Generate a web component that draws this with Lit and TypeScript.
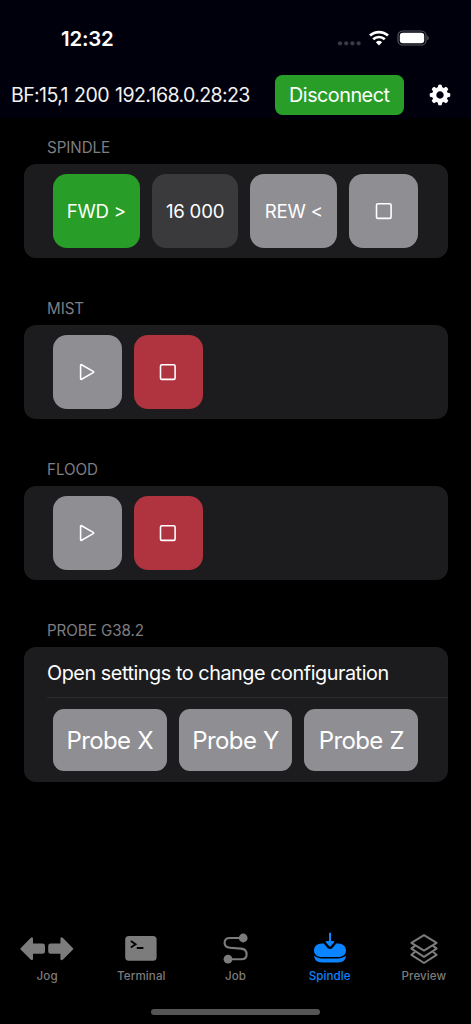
import { LitElement, html, css, svg } from "lit";
import { customElement, property } from "lit/decorators.js";

const gearTeeth = [0, 45, 90, 135, 180, 225, 270, 315];

const stopIcon = html`<svg width="18" height="18" viewBox="0 0 18 18">
  <rect x="1.5" y="1.8" width="14.6" height="14.6" rx="1.4" fill="none" stroke="#fff" stroke-width="1.6" />
</svg>`;

const playIcon = html`<svg width="18" height="18" viewBox="0 0 18 18">
  <path d="M2.6 2.2V15.8Q2.7 16.7 3.6 16.2L15.2 9.6Q16 9 15.2 8.4L3.6 1.8Q2.7 1.3 2.6 2.2Z" fill="none" stroke="#fff" stroke-width="1.6" stroke-linejoin="round" />
</svg>`;

const tabIcons: Record<string, unknown> = {
  Jog: html`<svg width="54" height="34" viewBox="0 0 54 34" fill="currentColor">
    <path d="M0.6 16.2L10.6 6Q13 4 13 7V11.6H22.5Q25 11.6 25 14V19.4Q25 21.8 22.5 21.8H13V26.6Q13 29.4 10.6 27.4L0.6 17.6Q0 16.9 0.6 16.2Z" />
    <path d="M53 16.2L43 6Q40.4 4 40.4 7V11.6H30.6Q28.2 11.6 28.2 14V19.4Q28.2 21.8 30.6 21.8H40.4V26.6Q40.4 29.4 43 27.4L53 17.6Q53.6 16.9 53 16.2Z" />
  </svg>`,
  Terminal: html`<svg width="32" height="34" viewBox="0 0 32 34">
    <rect x="0.2" y="4" width="31.4" height="24.8" rx="3.6" fill="currentColor" />
    <path d="M5.8 9L10.6 12.2L5.8 15.4M11.8 16H18.4" fill="none" stroke="#000" stroke-width="1.8" />
  </svg>`,
  Job: html`<svg width="26" height="34" viewBox="0.4 0 26 34" fill="none" stroke="currentColor">
    <circle cx="20.6" cy="6" r="4.4" fill="currentColor" stroke="none" />
    <circle cx="5.4" cy="27.2" r="4.4" fill="currentColor" stroke="none" />
    <path d="M20 6H7.2Q2 6 2 10.8Q2 15.4 7.2 15.8L18.4 16.6Q24 17 24 22.4Q24 27.2 18.6 27.2H6" stroke-width="2.1" />
  </svg>`,
  Spindle: html`<svg width="34" height="34" viewBox="0 0 34 34" fill="currentColor">
    <path d="M16 1Q17 0 18 1V9H20.5Q22 9 21 10.4L17.8 14.2Q17 15 16.2 14.2L13 10.4Q12 9 13.5 9H16Z" />
    <path d="M9 11.6H10.8L14.6 15.9Q17 18 19.4 15.9L23.2 11.6H25C30 11.6 33 14.6 33 18.4S30 25 25 25H9C4 25 1 22.2 1 18.4S4 11.6 9 11.6Z" />
    <path d="M1 23.6Q3.8 26.4 9 26.4H25Q30.2 26.4 33 23.6Q32.4 30.6 25 30.6H9Q1.6 30.6 1 23.6Z" />
  </svg>`,
  Preview: html`<svg width="30" height="34" viewBox="0 0 30 34" fill="none" stroke="currentColor" stroke-width="2" stroke-linejoin="round">
    <path d="M15 3.2L27.6 10.8L15 18.6L2.4 10.8Z" />
    <path d="M6.2 13.6L2.4 16.6L15 24.8L27.6 16.6L23.8 13.6" />
    <path d="M6.2 19.8L2.4 22.8L15 31L27.6 22.8L23.8 19.8" />
  </svg>`,
};

@customElement("app-section")
class AppSection extends LitElement {
  @property() heading = "";

  static styles = css`
    :host { display: block; margin-bottom: 34px; }
    .heading {
      height: 33px; line-height: 33px; padding-left: 23.5px;
      font-size: 15.2px; letter-spacing: -0.08px; color: #7d7d82;
    }
    .card { background: #1c1c1e; border-radius: 12px; margin-top: -0.5px; overflow: hidden; }
  `;

  render() {
    return html`<div class="heading">${this.heading}</div>
      <div class="card"><slot></slot></div>`;
  }
}

@customElement("app-root")
class AppRoot extends LitElement {
  static styles = css`
    :host {
      display: flex; flex-direction: column; width: 471px; height: 1024px; overflow: hidden;
      background: #000; color: #fff; font-family: Inter, "Liberation Sans", sans-serif;
      white-space: nowrap;
    }
    svg { display: block; flex: none; }
    .top { background: #00000c; height: 118px; margin-bottom: 13px; flex: none; }
    .status { display: flex; align-items: center; height: 76px; padding: 0 42px 0 61px; box-sizing: border-box; }
    .time { font-size: 20.4px; font-weight: 600; letter-spacing: -0.2px; flex: 1; }
    .bar { display: flex; align-items: center; height: 38.6px; padding: 0 19px 0 11px; }
    .address { width: 263.5px; font-size: 19.6px; letter-spacing: -0.64px; word-spacing: 1.4px; color: #f2f2f2; }
    .disconnect {
      width: 129.5px; height: 40px; line-height: 41px; text-align: center; background: #289e28;
      border-radius: 7.5px; font-size: 19.8px; letter-spacing: -0.5px; margin-right: 25px;
    }
    .content { flex: 1; padding: 0 23.5px; }
    .row { display: flex; gap: 12px; padding: 10.5px 29.3px; }
    .key {
      display: flex; align-items: center; justify-content: center; box-sizing: border-box;
      width: 69px; height: 73.5px; border-radius: 14px; background: #8e8e93;
      font-size: 18.6px; letter-spacing: -0.2px;
    }
    .wide { width: 87.2px; }
    .green { background: #289e28; }
    .dark { background: #3a3a3c; width: 86.5px; }
    .red { background: #b03340; }
    .probe { width: 114px; height: 62.5px; border-radius: 11px; font-size: 24px; letter-spacing: -0.62px; word-spacing: 0.6px; padding-top: 1px; }
    .note {
      height: 51.5px; line-height: 52px; margin-left: 23.5px; border-bottom: 1px solid #2b2b2d;
      font-size: 19.8px; letter-spacing: -0.44px; box-sizing: border-box;
    }
    .tabs { display: flex; padding-bottom: 25px; }
    .tab {
      display: flex; flex-direction: column; align-items: center; gap: 2px; flex: 1;
      width: 94px; font-size: 11.6px; font-weight: 500; line-height: 16px; color: #7c7c7c; letter-spacing: 0.1px;
    }
    .active { color: #0a84ff; }
    .home { width: 169px; height: 6px; border-radius: 3px; background: #555; margin: 0 auto 9px; }
  `;

  renderStatus() {
    return html`<div class="status">
      <span class="time">12:32</span>
      <svg width="92" height="18" viewBox="0 0 92 18">
        <g fill="#3a3a46">
          ${[3, 9.2, 15.4, 21.6].map((x) => svg`<circle cx=${x} cy="14.3" r="2.1" />`)}
        </g>
        <g fill="none" stroke="#fff" stroke-width="2.7">
          <path d="M33 6.6A13.2 13.2 0 0 1 51 6.6" />
          <path d="M36.2 10.3A8.4 8.4 0 0 1 47.8 10.3" />
        </g>
        <path d="M42 16.4L38.9 13.3A4.5 4.5 0 0 1 45.1 13.3Z" fill="#fff" />
        <rect x="61" y="2" width="28" height="14" rx="4.6" fill="none" stroke="#55555f" stroke-width="1.2" />
        <rect x="62.8" y="3.8" width="24.4" height="10.4" rx="3" fill="#fff" />
        <path d="M90.2 6.8Q91.8 7.2 91.8 9T90.2 11.2Z" fill="#55555f" />
      </svg>
    </div>`;
  }

  renderGear() {
    return html`<svg width="22" height="22" viewBox="-11 -11 22 22">
      <circle r="5.8" fill="none" stroke="#fff" stroke-width="4.2" />
      ${gearTeeth.map(
        (a) => svg`<path d="M-2.5 -6.8L-1.7 -10Q0 -10.8 1.7 -10L2.5 -6.8Z" fill="#fff" transform="rotate(${a})" />`
      )}
    </svg>`;
  }

  renderCoolant(name: string) {
    return html`<app-section heading=${name}>
      <div class="row">
        <div class="key">${playIcon}</div>
        <div class="key red">${stopIcon}</div>
      </div>
    </app-section>`;
  }

  render() {
    return html`
      <div class="top">
        ${this.renderStatus()}
        <div class="bar">
          <span class="address">BF:15,1 200 192.168.0.28:23</span>
          <div class="disconnect">Disconnect</div>
          ${this.renderGear()}
        </div>
      </div>
      <div class="content">
        <app-section heading="SPINDLE">
          <div class="row">
            <div class="key wide green">FWD &gt;</div>
            <div class="key dark">16 000</div>
            <div class="key wide">REW &lt;</div>
            <div class="key">${stopIcon}</div>
          </div>
        </app-section>
        ${this.renderCoolant("MIST")} ${this.renderCoolant("FLOOD")}
        <app-section heading="PROBE G38.2">
          <div class="note">Open settings to change configuration</div>
          <div class="row">
            ${["X", "Y", "Z"].map((axis) => html`<div class="key probe">Probe ${axis}</div>`)}
          </div>
        </app-section>
      </div>
      <div class="tabs">
        ${Object.keys(tabIcons).map(
          (name) => html`<div class="tab ${name === "Spindle" ? "active" : ""}">${tabIcons[name]}<span>${name}</span></div>`
        )}
      </div>
      <div class="home"></div>
    `;
  }
}
